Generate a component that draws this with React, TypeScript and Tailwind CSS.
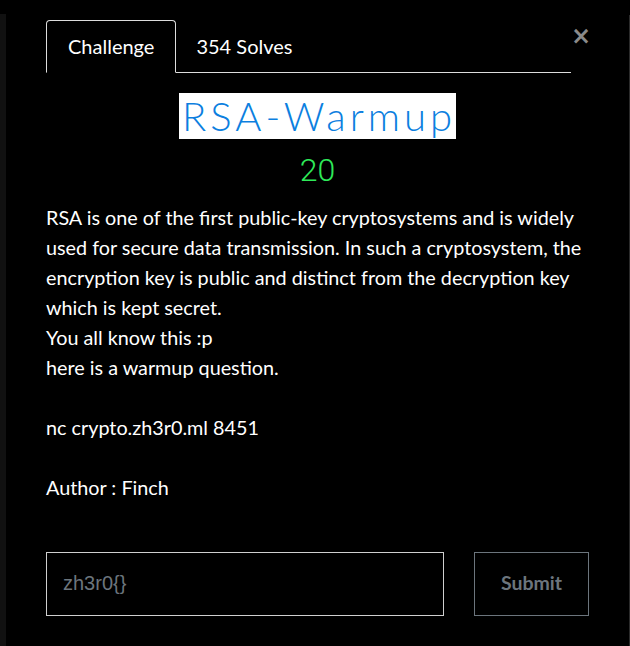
import React from 'react';

const App = () => {
  return (
    <div className="flex min-h-[646px] w-[630px] bg-black font-['Lato',sans-serif] text-white">
      <div className="mt-[14px] w-[6px] shrink-0 bg-[#111111]" />
      <div className="min-w-0 flex-1 pl-[40px] pr-[40px] pt-[20px]">
        <div className="flex items-start">
          <ul className="flex flex-1 border-b border-[#dddddd]">
            <li className="-mb-px rounded-t-[4px] border border-[#dddddd] border-b-black px-[21px] pb-[12px] pt-[13px] text-[20px] leading-[25px]">
              Challenge
            </li>
            <li className="border border-transparent px-[19px] pb-[12px] pt-[13px] text-[20px] leading-[25px]">
              354 Solves
            </li>
          </ul>
          <button className="mt-[4px] w-[18px] pr-[2px] text-center font-['DejaVu_Sans',sans-serif] text-[24px] font-bold leading-[24px] text-[#8a8a8a]">
            ×
          </button>
        </div>

        <div className="mt-[20px] flex flex-col items-center">
          <h1 className="bg-white pl-[3px] pr-0 text-[40px] font-light leading-[46px] tracking-[4px] text-[#0c7fdf]">
            RSA-Warmup
          </h1>
          <div className="mt-[11px] font-['Roboto',sans-serif] text-[32px] font-light leading-[40px] text-[#2eea59]">20</div>
        </div>

        <div className="mt-[12px] text-[19.8px] leading-[30px]">
          <p>
            RSA is one of the first public-key cryptosystems and is widely used for secure data transmission. In such a
            cryptosystem, the encryption key is public and distinct from the decryption key which is kept secret.
          </p>
          <p>You all know this :p</p>
          <p>here is a warmup question.</p>
          <p className="h-[30px]" />
          <p>nc crypto.zh3r0.ml 8451</p>
          <p className="h-[30px]" />
          <p>Author : Finch</p>
        </div>

        <div className="mt-[50px] flex gap-[30px]">
          <input
            placeholder="zh3r0{}"
            className="h-[64px] w-[398px] shrink-0 border border-[#cfcfcf] bg-black px-[16px] pb-[2px] font-['Liberation_Sans',sans-serif] text-[20px] text-white outline-none placeholder:text-[#6c757d]"
          />
          <button className="h-[64px] w-[115px] shrink-0 border border-[#6c757d] pb-[3px] text-[19.5px] font-bold text-[#6c757d]">
            Submit
          </button>
        </div>
      </div>
      <div className="mt-[15px] w-px shrink-0 bg-[#2b2b2b]" />
    </div>
  );
};

export default App;
